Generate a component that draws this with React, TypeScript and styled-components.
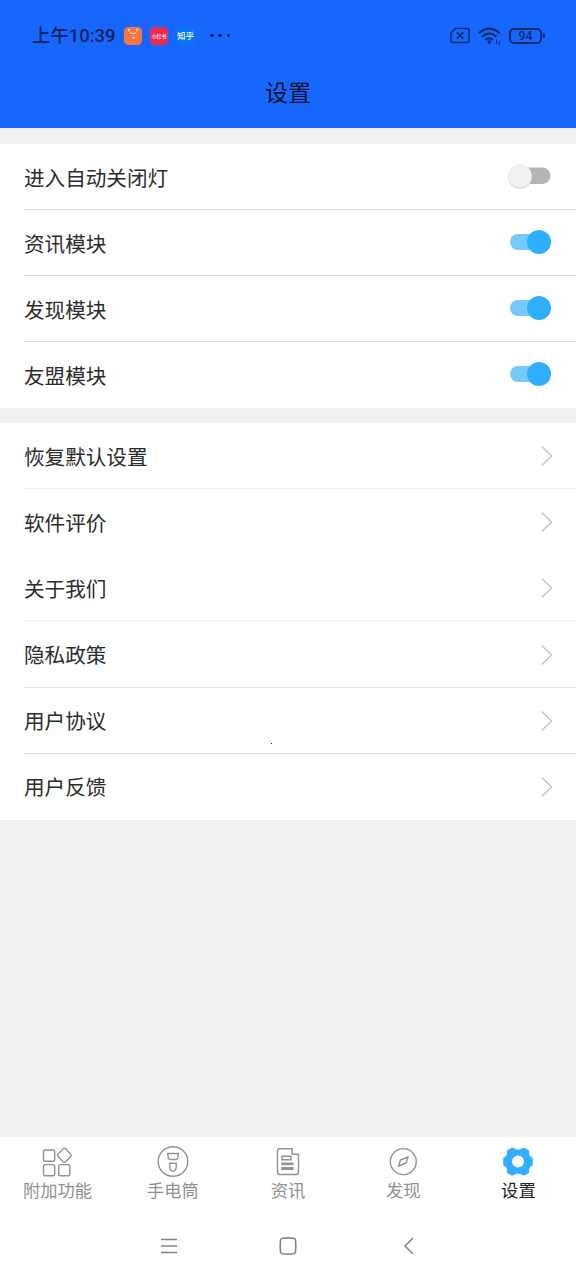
import React from 'react';
import styled, { createGlobalStyle } from 'styled-components';

const GlobalStyle = createGlobalStyle`
  * { box-sizing: border-box; }
  body {
    margin: 0;
    background: #f0f0f0;
    font-family: Roboto, "Noto Sans CJK SC", sans-serif;
  }
  svg { display: block; flex: none; }
`;

const Screen = styled.div`
  position: relative;
  width: 576px;
  height: 1280px;
  display: flex;
  flex-direction: column;
  background: #f0f0f0;
  overflow: hidden;
`;

const Header = styled.header`
  height: 128px;
  flex: none;
  background: #1767ff;
`;

const StatusBar = styled.div`
  height: 56px;
  padding: 15px 31px 0 32px;
  display: flex;
  justify-content: space-between;
`;

const StatusGroup = styled.div<{ $gap: number }>`
  height: 41px;
  display: flex;
  align-items: center;
  gap: ${(p) => p.$gap}px;
`;

const Clock = styled.span`
  width: 83px;
  font-size: 18.4px;
  line-height: 24px;
  font-weight: 500;
  color: #0b2355;
  white-space: nowrap;
`;

const AppBadge = styled.span<{ $bg: string; $size: number }>`
  width: 18px;
  height: 18px;
  display: flex;
  align-items: center;
  justify-content: center;
  border-radius: 4.5px;
  background: ${(p) => p.$bg};
  color: #fff;
  font-size: ${(p) => p.$size}px;
  line-height: 18px;
  font-weight: 500;
  white-space: nowrap;
`;

const Dots = styled.span`
  display: flex;
  gap: 4.7px;
  margin-left: 7px;
  i {
    width: 3.6px;
    height: 3.6px;
    border-radius: 50%;
    background: #0b1e4a;
  }
`;

const Title = styled.h1`
  margin: 0;
  height: 72px;
  line-height: 75px;
  text-align: center;
  font-size: 23px;
  font-weight: 400;
  color: #06122e;
`;

const Group = styled.section<{ $top: number }>`
  margin-top: ${(p) => p.$top}px;
  padding-left: 24px;
  flex: none;
  background: #fff;
`;

const Row = styled.div<{ $h: number; $line: string; $lift?: number }>`
  height: ${(p) => p.$h}px;
  padding-right: 23px;
  display: flex;
  align-items: center;
  justify-content: space-between;
  border-bottom: 1px solid ${(p) => p.$line};
  svg { margin-bottom: ${(p) => p.$lift ?? 0}px; }
`;

const Label = styled.span`
  font-size: 20.6px;
  line-height: 30px;
  padding-top: 4px;
  color: #2c2c2c;
`;

const TouchDot = styled.i`
  position: absolute;
  left: 271px;
  top: 743px;
  width: 1px;
  height: 1px;
  background: #333;
`;

const TabBar = styled.nav`
  height: 74px;
  margin-top: auto;
  flex: none;
  display: grid;
  grid-template-columns: repeat(5, 1fr);
  background: #fff;
  border-top: 1px solid #f4f4f4;
`;

const Tab = styled.div<{ $active?: boolean }>`
  padding-top: 8px;
  display: flex;
  flex-direction: column;
  align-items: center;
  color: ${(p) => (p.$active ? '#222' : '#909090')};
  span {
    font-size: 17.3px;
    line-height: 24px;
    white-space: nowrap;
  }
`;

const SystemNav = styled.div`
  height: 70px;
  flex: none;
  padding: 1px 158px 0 158px;
  display: flex;
  align-items: center;
  justify-content: space-between;
  background: #fff;
`;

const Switch = ({ on }: { on?: boolean }) => (
  <svg width="48" height="32" viewBox="0 0 48 32">
    {on ? (
      <>
        <rect x="5" y="8" width="38" height="16" rx="8" fill="#75c9fc" />
        <circle cx="34" cy="16" r="12" fill="#2faefb" />
      </>
    ) : (
      <>
        <rect x="8" y="7.5" width="37.5" height="16.5" rx="8.2" fill="#b4b4b4" />
        <circle cx="15" cy="16.8" r="12" fill="#d2d2d2" />
        <circle cx="15" cy="15.9" r="11.7" fill="#f1f1f1" />
      </>
    )}
  </svg>
);

const Chevron = () => (
  <svg width="13" height="22" viewBox="0 0 13 22" fill="none" stroke="#c8c8c8" strokeWidth="1.5">
    <path d="M1.8 1.6 11.6 11 1.8 20.4" />
  </svg>
);

const iconProps = { width: 34, height: 34, viewBox: '0 0 34 34', fill: 'none', stroke: '#929292', strokeWidth: 1.4 };

const GridIcon = () => (
  <svg {...iconProps}>
    <rect x="2.5" y="5" width="11.2" height="11.2" rx="1.8" />
    <rect x="2.5" y="19.6" width="11.2" height="11.2" rx="1.8" />
    <rect x="17.7" y="19.6" width="11.2" height="11.2" rx="1.8" />
    <path d="M22.2 3.8q1.2-1 2.4 0l5.2 5.400q1 1.200 0 2.400l-5.200 5.200q-1.200 1-2.400 0l-5.200-5.200q-1-1.200 0-2.400Z" />
  </svg>
);

const TorchIcon = () => (
  <svg {...iconProps}>
    <circle cx="17" cy="16.5" r="14.8" />
    <path d="M11.700 8.500h10.600l-.5 4q-.3 2-2 2h-5.600q-1.700 0-2-2ZM13.800 18.200h6.400v4.300q-.3 3.600-3.200 3.600t-3.200-3.600Z" />
  </svg>
);

const NewsIcon = () => (
  <svg {...iconProps}>
    <path d="M21.200 3.700H8.700q-2.200 0-2.200 2.200v21.400q0 2.200 2.200 2.200h16.600q2.200 0 2.200-2.200V9.200h-6.300Z" />
    <path d="M11 11.200h9v3.600h-9ZM11 18.300h10.800v1.300H11ZM11 22.700h10.800v1.600H11Z" />
  </svg>
);

const CompassIcon = () => (
  <svg {...iconProps}>
    <circle cx="17.3" cy="16.600" r="13" />
    <path d="m12.700 21 1.700-6 7.500-3-1.700 6Z" />
  </svg>
);

const GearIcon = () => (
  <svg width="34" height="34" viewBox="0 0 34 34">
    <path
      fill="#31aefc"
      fillRule="evenodd"
      d="M10.200 3Q11.300 2.400 12.400 3q2.200 1.700 4.600 1.700T21.600 3q1.100-.6 2.200 0l3.200 1.800q1.300.8 1.100 2.400-.4 4 3.100 5.300.6.300.6 1.200v5.800q0 .9-.6 1.200-3.500 1.300-3.100 5.300.2 1.600-1.100 2.400L23.800 30.200q-1.100.6-2.200 0-2.200-1.700-4.600-1.700t-4.600 1.700q-1.100.6-2.200 0L7 28.400q-1.300-.8-1.100-2.400.4-4-3.100-5.300-.6-.3-.6-1.200v-5.800q0-.9.6-1.200 3.500-1.300 3.100-5.300Q5.700 5.600 7 4.800ZM17 10.600a6 6 0 1 0 0 12 6 6 0 0 0 0-12Z"
    />
  </svg>
);

const BagIcon = () => (
  <svg width="18" height="18" viewBox="0 0 18 18" fill="none" stroke="#ffe6d8" strokeWidth="1">
    <path d="M4.500 2.500c1 5.500 8 5.500 9 0M8 10.500l1.500 1 1.500-1.200M9.500 9.800v2" />
    <path d="M4 2.500h2M12 2.500h2" />
  </svg>
);

const NoSimIcon = () => (
  <svg width="20" height="17" viewBox="0 0 20 17" fill="none" stroke="#0c2b6c" strokeWidth="1.500">
    <path d="M5.400 1.500h12q1.600 0 1.600 1.500v11q0 1.500-1.600 1.500h-15Q1 15.500 1 14V6Z" />
    <path d="m7 5.300 6.200 6.200m0-6.200L7 11.500" strokeWidth="1.700" />
  </svg>
);

const WifiIcon = () => (
  <svg width="24" height="20" viewBox="0 0 24 20" fill="none" stroke="#0c2b6c" strokeWidth="2.200">
    <path d="M.8 7.300q10.400-9.500 21 0M4.100 10.700q7.200-6.500 14.400 0M7.400 14q3.900-3.400 7.800 0" />
    <circle cx="11.300" cy="16" r="1.800" fill="#0c2b6c" stroke="none" />
    <path d="M18.600 13.500v4.500M21.300 14.800v4.500" strokeWidth="1.100" />
  </svg>
);

const Battery = styled.span`
  display: flex;
  align-items: center;
  &::after {
    content: '';
    width: 2px;
    height: 5px;
    margin-left: 1px;
    border-radius: 0 2px 2px 0;
    background: #0c2b6c;
  }
`;

const BatteryLevel = styled.span`
  width: 33px;
  height: 16px;
  border: 2px solid #0c2b6c;
  border-radius: 5px;
  text-align: center;
  font-size: 12.500px;
  line-height: 12px;
  font-weight: 500;
  color: #0c2b6c;
`;

const switches = [
  { label: '进入自动关闭灯', on: false },
  { label: '资讯模块', on: true },
  { label: '发现模块', on: true },
  { label: '友盟模块', on: true },
];

const links = [
  { label: '恢复默认设置', line: '#f0f0f0' },
  { label: '软件评价', line: '#fff' },
  { label: '关于我们', line: '#f2f2f2' },
  { label: '隐私政策', line: '#e6e6e6' },
  { label: '用户协议', line: '#e2e2e2' },
  { label: '用户反馈', line: '#fff' },
];

const tabs = [
  { label: '附加功能', Icon: GridIcon },
  { label: '手电筒', Icon: TorchIcon },
  { label: '资讯', Icon: NewsIcon },
  { label: '发现', Icon: CompassIcon },
  { label: '设置', Icon: GearIcon, active: true },
];

export default function App() {
  return (
    <Screen>
      <GlobalStyle />
      <Header>
        <StatusBar>
          <StatusGroup $gap={8.500}>
            <Clock>上午10:39</Clock>
            <AppBadge $bg="#fb7444" $size={6}><BagIcon /></AppBadge>
            <AppBadge $bg="#ef2950" $size={5}>小红书</AppBadge>
            <AppBadge $bg="#0877f5" $size={8.500}>知乎</AppBadge>
            <Dots><i /><i /><i /></Dots>
          </StatusGroup>
          <StatusGroup $gap={7.500}>
            <NoSimIcon />
            <WifiIcon />
            <Battery><BatteryLevel>94</BatteryLevel></Battery>
          </StatusGroup>
        </StatusBar>
        <Title>设置</Title>
      </Header>
      <Group $top={16}>
        {switches.map((s, i) => (
          <Row key={s.label} $h={66} $lift={1.500} $line={i === switches.length - 1 ? '#fff' : '#dedede'}>
            <Label>{s.label}</Label>
            <Switch on={s.on} />
          </Row>
        ))}
      </Group>
      <Group $top={15}>
        {links.map((l) => (
          <Row key={l.label} $h={66.170} $lift={-1} $line={l.line}>
            <Label>{l.label}</Label>
            <Chevron />
          </Row>
        ))}
      </Group>
      <TouchDot />
      <TabBar>
        {tabs.map(({ label, Icon, active }) => (
          <Tab key={label} $active={active}>
            <Icon />
            <span>{label}</span>
          </Tab>
        ))}
      </TabBar>
      <SystemNav>
        <svg width="22" height="22" viewBox="0 0 22 22" stroke="#858585" strokeWidth="1.500">
          <path d="M3 4.500h16M3 11h16M3 17.500h16" />
        </svg>
        <svg width="22" height="22" viewBox="0 0 22 22" fill="none" stroke="#858585" strokeWidth="1.600">
          <path d="M5.500 3.200q5.500-.6 11 0 1.800.3 2 2 .6 5.800 0 11.600-.2 1.700-2 2-5.500.6-11 0-1.800-.3-2-2-.6-5.800 0-11.600.2-1.700 2-2Z" />
        </svg>
        <svg width="22" height="22" viewBox="0 0 22 22" fill="none" stroke="#858585" strokeWidth="1.500">
          <path d="M17 3 9 11l8 8" />
        </svg>
      </SystemNav>
    </Screen>
  );
}
